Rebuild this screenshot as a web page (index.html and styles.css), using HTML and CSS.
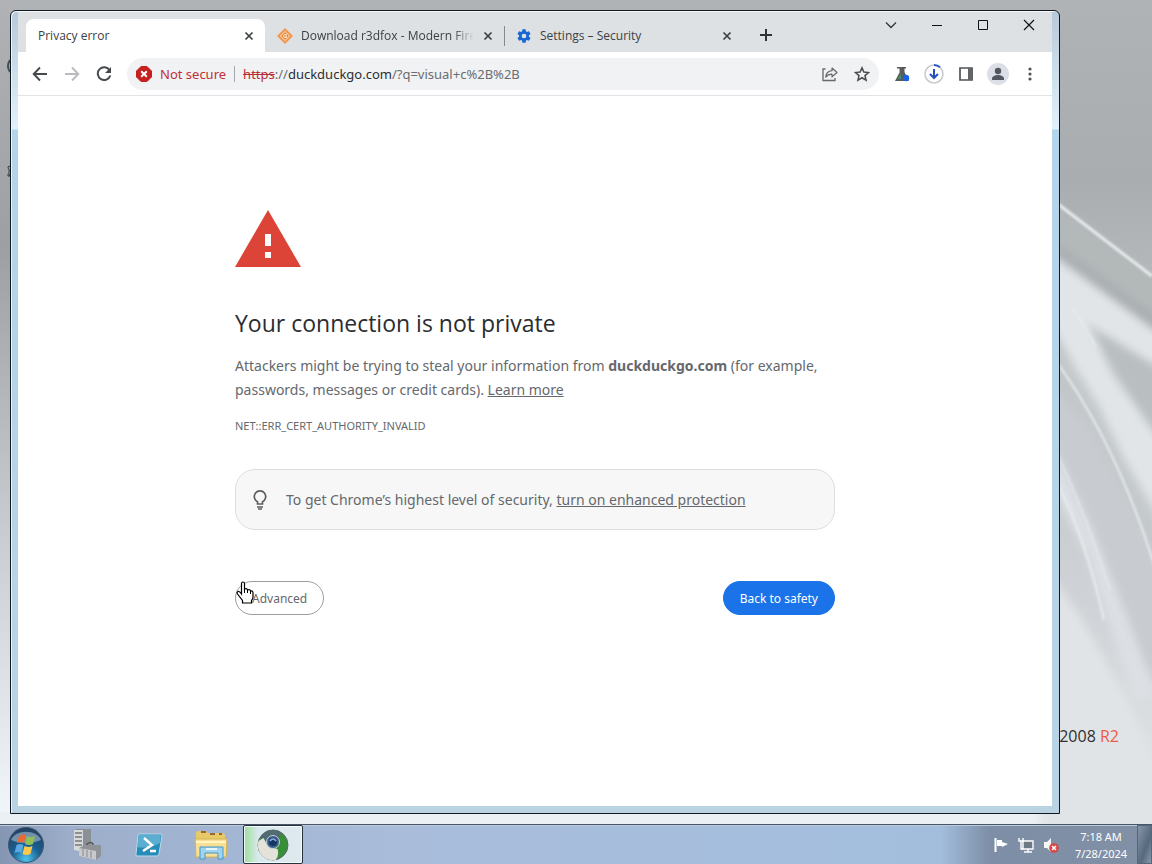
FILE: index.html
```html
<!DOCTYPE html>
<html lang="en">
<head>
<meta charset="utf-8">
<title>Privacy error</title>
<link rel="stylesheet" href="styles.css">
</head>
<body>
<main class="desktop">
  <svg class="wallpaper" viewBox="0 0 1152 824" preserveAspectRatio="none" aria-hidden="true">
    <defs>
      <linearGradient id="sky" x1="0" y1="0" x2="0" y2="1"><stop offset="0" stop-color="#b0b3b6"/><stop offset=".22" stop-color="#a9adaf"/><stop offset=".45" stop-color="#c0c4c6"/><stop offset=".75" stop-color="#d0d4d8"/><stop offset="1" stop-color="#e4e8e9"/></linearGradient>
      <linearGradient id="edge" x1="0" y1="0" x2="0" y2="1"><stop offset="0" stop-color="#b0b2b5"/><stop offset=".3" stop-color="#9da0a2"/><stop offset=".65" stop-color="#c9cdd1"/><stop offset="1" stop-color="#f2f7fb"/></linearGradient>
      <filter id="soft"><feGaussianBlur stdDeviation="4"/></filter>
      <filter id="fine"><feGaussianBlur stdDeviation="1"/></filter>
    </defs>
    <path d="M0 0h1152v824H0z" fill="url(#sky)"/>
    <path d="M0 0h20v824H0z" fill="url(#edge)"/>
    <path d="M0 812h1152v12H0z" fill="#eaf0f3"/>
    <g filter="url(#soft)">
      <path d="M1040 190l130 100v60l-130-98z" fill="#b3b8b9"/>
      <path d="M1040 232l130 94v16l-130-86z" fill="#a9aeb0"/>
      <path d="M1040 246l130 96v34l-85-50-45-10z" fill="#e2e5e8"/>
      <path d="M1085 322l85 52v86z" fill="#b9bfc1"/>
      <path d="M1040 290l33 12 21 33 19 40 57 80v80l-45-75-25-52-20-32-40-70z" fill="#e1e5e8"/>
      <path d="M1040 330l40 44 20 34 25 56 45 86v44l-60-130-70-130z" fill="#c4c9cc"/>
      <path d="M1040 370l50 60 26 56 54 114v110l-60-110-70-160z" fill="#c8ccd1"/>
      <path d="M1050 440l40 84 36 90 30 80-20 10-50-150-36-70z" fill="#dce0e4"/>
      <path d="M1040 560l40 56 50 90 40 94v30h-130z" fill="#e0e4e6"/>
    </g>
    <g fill="none" stroke="#e8ecee" filter="url(#fine)">
      <path d="M1050 198l102 78" stroke-width="3"/>
      <path d="M1072 308q14 18 24 40" stroke-width="1.500"/>
      <path d="M1058 364q58 80 96 200" stroke-width="2"/>
      <path d="M1058 456q28 58 52 134" stroke-width="1.200"/>
      <path d="M1058 484q28 56 46 136" stroke-width="2"/>
    </g>
    <path d="M10 60q-4 6 0 12" fill="none" stroke="#3f5053" stroke-width="2"/>
    <path d="M11 166q-4 0-3 2t3 3M7 175h4M9 170v7" fill="none" stroke="#34383a"/>
  </svg>
  <p class="edition">2008 <span class="edition-release">R2</span></p>

  <section class="window">
    <div class="frame">
      <header class="tabstrip">
        <div class="tab tab-active">
          <span class="tab-title">Privacy error</span>
          <button class="tab-close" aria-label="Close tab"><svg width="10" height="10" viewBox="0 0 10 10"><path d="M1.500 1.500l7 7M8.500 1.500l-7 7" stroke="#3c4043" stroke-width="1.700"/></svg></button>
        </div>
        <div class="tab">
          <svg width="16" height="16" viewBox="0 0 16 16"><path d="M8 0l8 8-8 8-8-8z" fill="#f0974a"/><path d="M8 3l5 5-5 5-5-5z" fill="#f9e3cf"/><path d="M8 4l4 4-4 4-4-4z" fill="#e8873a"/><path d="M9.500 6.500H8a1.500 1.500 0 100 3h1.500V8H8" stroke="#fbe9d7" fill="none"/></svg>
          <span class="tab-title tab-title-fade">Download r3dfox - Modern Firefox</span>
          <button class="tab-close" aria-label="Close tab"><svg width="10" height="10" viewBox="0 0 10 10"><path d="M1.500 1.500l7 7M8.500 1.500l-7 7" stroke="#3c4043" stroke-width="1.700"/></svg></button>
        </div>
        <div class="tab tab-divided">
          <svg width="16" height="16" viewBox="0 0 24 24"><path fill="#1967d2" d="M19.400 13a7 7 0 000-2l2.100-1.700c.2-.1.300-.4.100-.6l-2-3.500c-.1-.2-.4-.3-.6-.2l-2.500 1a7 7 0 00-1.700-1L14.500 2.400c0-.2-.2-.4-.5-.4h-4c-.3 0-.5.2-.5.400L9.200 5a7 7 0 00-1.700 1L5 5c-.2-.1-.5 0-.6.200l-2 3.500c-.2.2-.1.5.1.600L4.600 11a7 7 0 000 2l-2.100 1.700c-.2.100-.3.400-.1.600l2 3.500c.1.200.4.300.6.200l2.500-1a7 7 0 001.700 1l.3 2.600c0 .2.200.4.500.4h4c.3 0 .5-.2.5-.4l.3-2.600a7 7 0 001.700-1l2.500 1c.2.100.5 0 .6-.2l2-3.500c.1-.2.1-.5-.1-.6zM12 15.500a3.500 3.500 0 110-7 3.500 3.500 0 010 7z"/></svg>
          <span class="tab-title">Settings – Security</span>
          <button class="tab-close" aria-label="Close tab"><svg width="10" height="10" viewBox="0 0 10 10"><path d="M1.500 1.500l7 7M8.500 1.500l-7 7" stroke="#3c4043" stroke-width="1.700"/></svg></button>
        </div>
        <button class="icon-button new-tab" aria-label="New tab"><svg width="12" height="12" viewBox="0 0 12 12"><path d="M6 0v12M0 6h12" stroke="#303336" stroke-width="2"/></svg></button>
        <div class="caption-buttons">
          <button class="caption-button" aria-label="Search tabs"><svg width="12" height="12" viewBox="0 0 12 12"><path d="M1 3.500l5 5 5-5" fill="none" stroke="#33363a" stroke-width="1.300"/></svg></button>
          <button class="caption-button" aria-label="Minimize"><svg width="12" height="12" viewBox="0 0 12 12"><path d="M1 6.500h10" stroke="#111"/></svg></button>
          <button class="caption-button" aria-label="Maximize"><svg width="12" height="12" viewBox="0 0 12 12"><path d="M1.500 1.500h9v9h-9z" fill="none" stroke="#111"/></svg></button>
          <button class="caption-button" aria-label="Close"><svg width="12" height="12" viewBox="0 0 12 12"><path d="M1 1l10 10M11 1L1 11" stroke="#111" stroke-width="1.200"/></svg></button>
        </div>
      </header>

      <nav class="toolbar">
        <button class="icon-button" aria-label="Back"><svg width="16" height="16" viewBox="0 0 16 16"><path d="M15 8H2M8 1.500L1.700 8 8 14.500" fill="none" stroke="#46494d" stroke-width="1.900"/></svg></button>
        <button class="icon-button" aria-label="Forward"><svg width="16" height="16" viewBox="0 0 16 16"><path d="M1 8h13M8 1.500L14.300 8 8 14.500" fill="none" stroke="#b9bbbe" stroke-width="1.900"/></svg></button>
        <button class="icon-button" aria-label="Reload"><svg width="16" height="16" viewBox="0 0 16 16"><path d="M13.600 4.200A6.400 6.400 0 1014.300 9.500" fill="none" stroke="#46494d" stroke-width="2"/><path d="M15 1v6H9z" fill="#46494d"/></svg></button>
        <div class="omnibox">
          <button class="site-info">
            <svg width="16" height="16" viewBox="0 0 16 16"><path d="M5 .5h6L15.500 5v6L11 15.500H5L.5 11V5z" fill="#c5221f" stroke="#c5221f" stroke-linejoin="round"/><path d="M5.200 5.200l5.600 5.600M10.800 5.200l-5.600 5.600" stroke="#fff" stroke-width="2"/></svg>
            Not secure
          </button>
          <span class="omnibox-divider"></span>
          <div class="url" role="textbox" contenteditable="true" spellcheck="false" aria-label="Address and search bar"><s class="url-scheme">https</s>://<span class="url-host">duckduckgo.com</span>/?q=visual+c%2B%2B</div>
          <button class="icon-button" aria-label="Share this page"><svg width="16" height="16" viewBox="0 0 16 16"><path d="M3.500 3H1v11.500h12V12" fill="none" stroke="#65686c" stroke-width="1.300"/><path d="M10 2l5 4.500-5 4.300V8.200c-3 0-4.800.8-6.300 2.900C4 7.500 6.500 5 10 4.700z" fill="none" stroke="#65686c" stroke-width="1.200" stroke-linejoin="round"/></svg></button>
          <button class="icon-button" aria-label="Bookmark this tab"><svg width="16" height="16" viewBox="0 0 24 24"><path d="M12 2.800l2.800 6.400 7 .6-5.300 4.600 1.600 6.800-6.100-3.600-6.100 3.600 1.600-6.800L2.200 9.800l7-.6z" fill="none" stroke="#4a4d51" stroke-width="2.300"/></svg></button>
        </div>
        <button class="icon-button" aria-label="Experiments"><svg width="16" height="16" viewBox="0 0 16 16"><path d="M3 1h9v1.500h-1.500V6l4.500 9H1l4.500-8.500v-4H3z" fill="#595c5f"/><path d="M7 7l-3.500 6H7z" fill="#478d62"/><circle cx="12" cy="12" r="3.200" fill="#1a62e8"/></svg></button>
        <button class="icon-button" aria-label="Downloads"><svg width="20" height="20" viewBox="0 0 20 20"><circle cx="10" cy="10" r="9" fill="none" stroke="#c8c9cc" stroke-width="1.500"/><path d="M10 1a9 9 0 016 2.300" fill="none" stroke="#2b56c6" stroke-width="2"/><path d="M10 5v9M6 10l4 4 4-4" fill="none" stroke="#2450b8" stroke-width="2"/></svg></button>
        <button class="icon-button" aria-label="Side panel"><svg width="16" height="16" viewBox="0 0 16 16"><path d="M2 2h12v12H2z" fill="#fff" stroke="#505356" stroke-width="1.700"/><path d="M10 2h5v12h-5z" fill="#626568"/></svg></button>
        <button class="icon-button" aria-label="Profile"><svg width="22" height="22" viewBox="0 0 22 22"><circle cx="11" cy="11" r="11" fill="#dcdfe8"/><circle cx="11" cy="8" r="3.200" fill="#53585f"/><path d="M5 17v-1.500c0-2.300 3.500-3.500 6-3.500s6 1.200 6 3.500V17z" fill="#53585f"/></svg></button>
        <button class="icon-button" aria-label="Menu"><svg width="16" height="16" viewBox="0 0 16 16" fill="#505356"><circle cx="8" cy="3" r="1.600"/><circle cx="8" cy="8" r="1.600"/><circle cx="8" cy="13" r="1.600"/></svg></button>
      </nav>

      <article class="page">
        <div class="interstitial">
          <svg class="warning" width="66" height="57" viewBox="0 0 66 57"><path d="M33 0l33 57H0z" fill="#db4437"/><path d="M30 24h6v12h-6zM30 42h6v6h-6z" fill="#fff"/></svg>
          <h1 class="heading">Your connection is not private</h1>
          <p class="message">Attackers might be trying to steal your information from <strong>duckduckgo.com</strong> (for example, passwords, messages or credit cards). <a class="link" href="#">Learn more</a></p>
          <p class="error-code">NET::ERR_CERT_AUTHORITY_INVALID</p>
          <div class="promo">
            <svg width="20" height="20" viewBox="0 0 20 20"><path d="M7.500 14v-2.300A5.700 5.700 0 1112.500 11.700V14z" fill="none" stroke="#5c5f62" stroke-width="1.700"/><path d="M7 17h6M8 19h4" stroke="#5c5f62" stroke-width="1.400"/></svg>
            <p class="promo-text">To get Chrome’s highest level of security, <a class="link" href="#">turn on enhanced protection</a></p>
          </div>
          <div class="actions">
            <button class="button">Advanced</button>
            <button class="button button-primary">Back to safety</button>
            <svg class="pointer" width="18" height="23" viewBox="0 0 18 23"><path d="M5.500 13V2.500q0-1.500 1.500-1.500t1.500 1.500V8q2.500-1 3 1 2.500-1 3 1 2.500-.5 2.500 2v4q0 2-1.500 3.500V22H6.500v-2.500L1.500 13q-1-2 .5-2.500t3.500 2.500z" fill="#fff" stroke="#000" stroke-width="1.200"/><path d="M8.500 7v5M11.500 9v3M14.500 10v3" stroke="#000"/></svg>
          </div>
        </div>
      </article>
    </div>
  </section>
</main>

<footer class="taskbar">
  <button class="start" aria-label="Start"><svg width="38" height="38" viewBox="0 0 38 38"><defs><radialGradient id="orb" cx=".5" cy=".9" r=".9"><stop offset="0" stop-color="#4fc5ee"/><stop offset=".45" stop-color="#196093"/><stop offset="1" stop-color="#253f5e"/></radialGradient></defs><circle cx="19" cy="19" r="17.500" fill="url(#orb)" stroke="#3c5570"/><path d="M4 14C8 3 30 3 34 14 25 18 13 18 4 14z" fill="#d7e3ee" opacity=".45"/><path d="M12 10q4-3 7-1l-2 8q-3-2-7 0z" fill="#e96a38"/><path d="M20 10q4 2 8 0l-2 8q-4 2-8 0z" fill="#8fc054"/><path d="M9.500 19q4-2 7 0l-2 8q-3-2-7 0z" fill="#5ba7e0"/><path d="M17.500 20q4 2 8 0l-2 8q-4 2-8 0z" fill="#fbc94b"/></svg></button>
  <button class="task" aria-label="Server Manager"><svg width="32" height="32" viewBox="0 0 32 32"><path d="M3 1l3-1h14v20l-9 3-8-2z" fill="#8b9096"/><path d="M3 1h9v22l-9-2z" fill="#d8dbdd"/><path d="M4 4h7M4 8h7M4 12h7M4 16h7" stroke="#777" stroke-width="1.400"/><path d="M16 17v-2q4-3 6 0v2" fill="none" stroke="#555" stroke-width="1.500"/><path d="M8 19l6-3h16v11l-5 4-17-4z" fill="#8f9297"/><path d="M8 19l17 3v9L8 27z" fill="#c7c9cc"/><path d="M12 20v7M16 21v7M20 22v7" stroke="#888"/></svg></button>
  <button class="task" aria-label="Windows PowerShell"><svg width="28" height="26" viewBox="0 0 28 26"><path d="M4 2h22q1.500 0 1 2l-3 18q-.3 2-2 2H2q-1.500 0-1-2L3 4q0-2 1-2z" fill="#288bb9" stroke="#b8dceb"/><path d="M4 3h22l-1 8Q14 17 2 15z" fill="#72bedb" opacity=".7"/><path d="M9 6l8 7-9 6M15 19h6" stroke="#fff" stroke-width="2.500" fill="none"/></svg></button>
  <button class="task" aria-label="Windows Explorer"><svg width="34" height="30" viewBox="0 0 34 30"><path d="M2 3q0-2 2-2h8l2 2h14q3 0 3 3v20H2z" fill="#e8c967"/><path d="M7 2h5M16 4h5M25 4h3" stroke="#9b653c" stroke-width="2"/><path d="M1 9h32l-1 18H2z" fill="#f7e095" stroke="#d2b258"/><path d="M2 12h30" stroke="#fff4c2" stroke-width="2"/><path d="M6 17h23v12h-5v-6H11v6H6z" fill="#9ed4ef" stroke="#4695c5"/><path d="M12 19h11" stroke="#e5f6ff" stroke-width="2"/></svg></button>
  <button class="task task-active" aria-label="Privacy error - Chromium"><svg width="32" height="32" viewBox="0 0 32 32"><circle cx="16" cy="16" r="15" fill="#388f38" stroke="#58666c"/><path d="M3 9Q8 1 16 1q5 0 8 3l-2 8-14 2z" fill="#526a72"/><path d="M1.500 12a15 15 0 0017 19q4-5 2-11l-9-2-5-9z" fill="#e4e2d9"/><circle cx="16" cy="13" r="6.500" fill="#3c5c8a" stroke="#c4d3dc"/><circle cx="16" cy="13" r="4" fill="#173762"/><path d="M13 12q3-4 6 0" stroke="#88b1df" stroke-width="1.500" fill="none"/></svg></button>
  <div class="tray">
    <svg width="16" height="16" viewBox="0 0 16 16"><path d="M2.500 1v14" stroke="#fff" stroke-width="2"/><path d="M4 3h5v2l6 2-6 3V9H4z" fill="#fff"/></svg>
    <svg width="16" height="16" viewBox="0 0 16 16"><path d="M5 4h10v8H5z" fill="#6d7984" stroke="#fff" stroke-width="1.400"/><path d="M10 12v3M6 15h8M1 1v3h4V1M3 4v8h2" stroke="#fff" stroke-width="1.400" fill="none"/></svg>
    <svg width="16" height="16" viewBox="0 0 16 16"><path d="M1 5h3l4-4v14l-4-4H1z" fill="#f7f7f7"/><circle cx="11" cy="11" r="4.800" fill="#d94444"/><path d="M9 9l4 4M13 9l-4 4" stroke="#fff" stroke-width="1.600"/></svg>
  </div>
  <time class="clock" datetime="2024-07-28T07:18"><span>7:18 AM</span><span>7/28/2024</span></time>
  <button class="show-desktop" aria-label="Show desktop"></button>
</footer>
</body>
</html>
```
FILE: styles.css
```css
* {
  box-sizing: border-box;
}

body {
  margin: 0;
  min-height: 100vh;
  display: flex;
  flex-direction: column;
  font-family: "Noto Sans", "Open Sans", sans-serif;
  font-size: 12px;
  color: #3c4043;
}

button {
  border: 0;
  padding: 0;
  background: none;
  font: inherit;
  color: inherit;
}

svg {
  flex: none;
  display: block;
}

p,
h1 {
  margin: 0;
}

.desktop {
  position: relative;
  flex: 1;
  display: flex;
  padding: 10px 92px 10px 10px;
}

.wallpaper {
  position: absolute;
  inset: 0;
  width: 100%;
  height: 100%;
}

.edition {
  position: absolute;
  right: 33px;
  bottom: 76px;
  font-family: "Open Sans", sans-serif;
  font-size: 16px;
  line-height: 24px;
  color: #2e3032;
}

.edition-release {
  color: #ee5b4b;
}

.window {
  position: relative;
  flex: 1;
  display: flex;
  border: 1px solid #101820;
  border-radius: 6px 6px 0 0;
  padding: 0 7px 7px;
  background: linear-gradient(#b7c9d9, #e0f1fc 118px, #b4d4eb 119px, #b9d3e3);
  box-shadow: inset 1px 1px #edf6fc;
}

.frame {
  flex: 1;
  min-width: 0;
  display: flex;
  flex-direction: column;
}

.tabstrip {
  display: flex;
  height: 41px;
  padding: 7px 0 0 8px;
  border-top: 1px solid #f4f8fa;
  background: #dee1e4;
  font-family: "Open Sans", sans-serif;
}

.tab {
  position: relative;
  flex: 0 1 239px;
  min-width: 0;
  display: flex;
  align-items: center;
  gap: 8px;
  padding: 0 10px 0 12px;
}

.tab-active {
  background: #fff;
  border-radius: 8px 8px 0 0;
}

.tab-divided::before {
  content: "";
  position: absolute;
  left: 0;
  width: 1px;
  height: 20px;
  background: #85898e;
}

.tab-title {
  flex: 1;
  overflow: hidden;
  white-space: nowrap;
}

.tab-title-fade {
  -webkit-mask-image: linear-gradient(90deg, #000 88%, transparent);
  mask-image: linear-gradient(90deg, #000 88%, transparent);
}

.tab-close {
  display: grid;
  place-items: center;
  width: 12px;
  height: 16px;
}

.icon-button {
  flex: none;
  display: grid;
  place-items: center;
  width: 28px;
  height: 32px;
}

.new-tab {
  margin-left: 9px;
}

.caption-buttons {
  display: flex;
  align-items: flex-start;
  margin: -8px 0 0 auto;
}

.caption-button {
  display: grid;
  place-items: center;
  width: 46px;
  height: 28px;
}

.toolbar {
  display: flex;
  align-items: center;
  gap: 4px;
  height: 44px;
  padding: 0 8px;
  background: #fff;
  border-bottom: 1px solid #e1e3e6;
}

.omnibox {
  flex: 1;
  min-width: 0;
  display: flex;
  align-items: center;
  gap: 4px;
  height: 32px;
  margin: 0 5px;
  padding: 0 3px 0 9px;
  border-radius: 16px;
  background: #f1f2f3;
  font-size: 13px;
}

.site-info {
  display: flex;
  align-items: center;
  gap: 8px;
  color: #bf3038;
  white-space: nowrap;
}

.omnibox-divider {
  width: 1px;
  height: 16px;
  margin: 0 4px;
  background: #a5a8ac;
}

.url {
  flex: 1;
  overflow: hidden;
  white-space: nowrap;
  color: #696d71;
}

.url-scheme {
  color: #b92e36;
}

.url-host {
  color: #2b2e31;
}

.page {
  flex: 1;
  padding: 114px 24px 24px;
  background: #fff;
}

.interstitial {
  max-width: 600px;
  margin: 0 auto;
  color: #65686c;
}

.heading {
  margin-top: 40px;
  font-family: "Open Sans", sans-serif;
  font-size: 23px;
  font-weight: 400;
  line-height: 32px;
  color: #2b2d30;
}

.message {
  margin-top: 15px;
  font-size: 14px;
  line-height: 24px;
}

.link {
  color: inherit;
  text-decoration: underline;
}

.error-code {
  margin-top: 16px;
  font-size: 11px;
  line-height: 16px;
}

.promo {
  display: flex;
  align-items: center;
  gap: 16px;
  min-height: 61px;
  margin-top: 35px;
  padding: 0 14px;
  border: 1px solid #dcdee0;
  border-radius: 20px;
  background: #f7f7f7;
}

.promo-text {
  font-size: 14px;
  line-height: 24px;
}

.actions {
  position: relative;
  display: flex;
  justify-content: space-between;
  margin-top: 51px;
}

.button {
  height: 34px;
  padding: 0 16px;
  border: 1px solid #9b9da0;
  border-radius: 17px;
}

.button-primary {
  border-color: #1a73e8;
  background: #1a73e8;
  color: #fff;
}

.pointer {
  position: absolute;
  left: 1px;
  top: 0;
}

.taskbar {
  display: flex;
  align-items: stretch;
  gap: 2px;
  height: 40px;
  padding-left: 7px;
  border-top: 1px solid #48566a;
  box-shadow: inset 0 1px #bdcad9;
  background: linear-gradient(90deg, #8496b1, #9caeca 70px, #a9bddb 400px, #a3bedd 940px, #7d8ea6 990px, #8290a5);
}

.start {
  width: 38px;
  margin-right: 10px;
}

.task {
  display: grid;
  place-items: center;
  width: 60px;
}

.task-active {
  border: 1px solid #26313e;
  border-radius: 2px;
  background: linear-gradient(90deg, #9be097, #d9e9ee 14px, #dfe9ef);
  box-shadow: inset 0 0 0 1px #f4fafc;
}

.tray {
  display: flex;
  align-items: center;
  gap: 9px;
  margin-left: auto;
  padding-right: 6px;
}

.clock {
  display: flex;
  flex-direction: column;
  align-items: center;
  justify-content: center;
  width: 68px;
  font-size: 11px;
  line-height: 17px;
  color: #fff;
}

.show-desktop {
  width: 15px;
  border: 1px solid #55657a;
  background: linear-gradient(110deg, #8696aa, #56697d 60%, #8797a8);
}
```
